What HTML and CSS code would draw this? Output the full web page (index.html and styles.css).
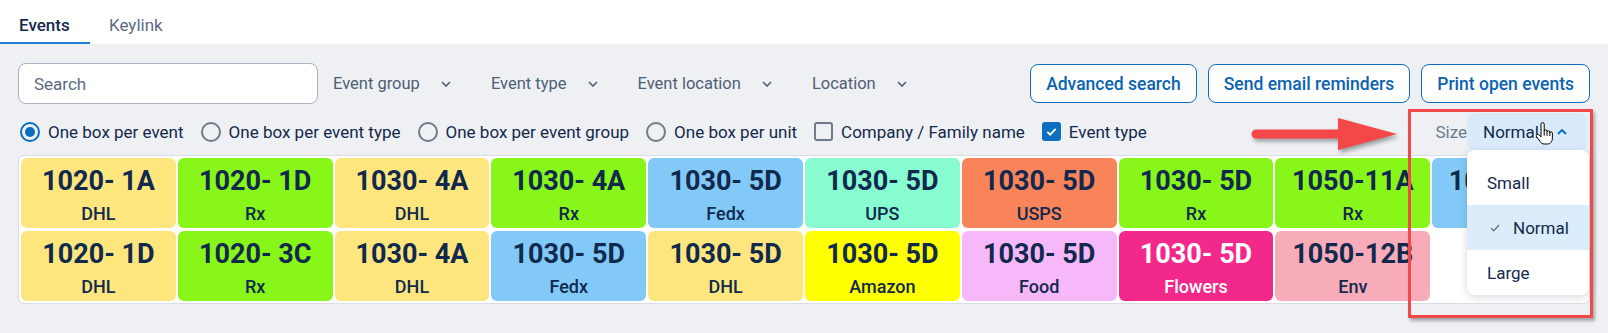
FILE: index.html
```html
<!DOCTYPE html>
<html lang="en">

<head>
    <meta charset="UTF-8">
    <meta name="viewport" content="width=device-width, initial-scale=1.0">
    <title>Events</title>
    <link rel="stylesheet" href="styles.css">
</head>

<body>
    <div class="page">
        <nav class="tabs">
            <a class="tab active" href="#">Events</a>
            <a class="tab" href="#">Keylink</a>
        </nav>

        <main class="content">
            <div class="toolbar">
                <input class="search" type="text" placeholder="Search">
                <div class="filters">
                    <span class="filter">Event group
                        <svg class="chev" viewBox="0 0 10 6"><path d="M1 1l4 4 4-4"/></svg></span>
                    <span class="filter">Event type
                        <svg class="chev" viewBox="0 0 10 6"><path d="M1 1l4 4 4-4"/></svg></span>
                    <span class="filter">Event location
                        <svg class="chev" viewBox="0 0 10 6"><path d="M1 1l4 4 4-4"/></svg></span>
                    <span class="filter">Location
                        <svg class="chev" viewBox="0 0 10 6"><path d="M1 1l4 4 4-4"/></svg></span>
                </div>
                <div class="actions">
                    <button class="btn">Advanced search</button>
                    <button class="btn">Send email reminders</button>
                    <button class="btn">Print open events</button>
                </div>
            </div>

            <div class="options">
                <label class="opt"><span class="radio checked"></span>One box per event</label>
                <label class="opt"><span class="radio"></span>One box per event type</label>
                <label class="opt"><span class="radio"></span>One box per event group</label>
                <label class="opt"><span class="radio"></span>One box per unit</label>
                <label class="opt"><span class="check"></span>Company / Family name</label>
                <label class="opt"><span class="check checked">
                    <svg viewBox="0 0 18 18"><path d="M4 9.5l3.3 3.3L14 5.8"/></svg></span>Event type</label>

                <div class="size">
                    <span class="size-label">Size</span>
                    <div class="size-select">
                        <button class="size-btn">Normal
                            <svg class="chev up" viewBox="0 0 10 6"><path d="M1 5l4-4 4 4"/></svg></button>
                        <svg class="cursor" viewBox="0 0 17 24">
                            <path d="M5 2.2a1.6 1.6 0 0 1 3.2 0v7a1.4 1.4 0 0 1 2.8 0v1a1.4 1.4 0 0 1 2.8 0v1a1.3 1.3 0 0 1 2.6 0v4.6c0 3.6-1.8 6.2-5 6.2h-3.2c-2 0-3.2-1-4.2-2.6l-3.4-4.8a1.4 1.4 0 0 1 2.2-1.8L5 14.8z"/>
                            <path d="M8.2 9.2v4.5M11 10.2v3.6M13.8 11.2v2.8"/>
                        </svg>
                        <ul class="size-menu">
                            <li>Small</li>
                            <li class="selected"><svg class="tick" viewBox="0 0 10 8"><path d="M1 4.2l2.8 2.6L9 1"/></svg>Normal</li>
                            <li>Large</li>
                        </ul>
                    </div>
                </div>
            </div>

            <div class="board">
                <div class="card c-yellow"><b>1020- 1A</b><span>DHL</span></div>
                <div class="card c-green"><b>1020- 1D</b><span>Rx</span></div>
                <div class="card c-yellow"><b>1030- 4A</b><span>DHL</span></div>
                <div class="card c-green"><b>1030- 4A</b><span>Rx</span></div>
                <div class="card c-blue"><b>1030- 5D</b><span>Fedx</span></div>
                <div class="card c-mint"><b>1030- 5D</b><span>UPS</span></div>
                <div class="card c-orange"><b>1030- 5D</b><span>USPS</span></div>
                <div class="card c-green"><b>1030- 5D</b><span>Rx</span></div>
                <div class="card c-green"><b>1050-11A</b><span>Rx</span></div>
                <div class="card c-blue"><b>1050-12A</b><span>Fedx</span></div>

                <div class="card c-yellow"><b>1020- 1D</b><span>DHL</span></div>
                <div class="card c-green"><b>1020- 3C</b><span>Rx</span></div>
                <div class="card c-yellow"><b>1030- 4A</b><span>DHL</span></div>
                <div class="card c-blue"><b>1030- 5D</b><span>Fedx</span></div>
                <div class="card c-yellow"><b>1030- 5D</b><span>DHL</span></div>
                <div class="card c-lemon"><b>1030- 5D</b><span>Amazon</span></div>
                <div class="card c-pink"><b>1030- 5D</b><span>Food</span></div>
                <div class="card c-magenta"><b>1030- 5D</b><span>Flowers</span></div>
                <div class="card c-rose"><b>1050-12B</b><span>Env</span></div>
            </div>
        </main>

        <!-- annotation drawn over the screenshot -->
        <div class="annot-box"></div>
        <svg class="annot-arrow" viewBox="0 0 160 40">
            <path d="M6 19H96" class="shaft"/>
            <polygon points="88,3 147,19 88,35"/>
        </svg>
    </div>
</body>

</html>
```

FILE: styles.css
```css
* {
    box-sizing: border-box;
}

body {
    margin: 0;
    background: #eef0f4;
    font-family: Roboto, "Liberation Sans", sans-serif;
    color: #11294a;
}

.page {
    position: relative;
    height: 333px;
    overflow: hidden;
}

/* tabs */
.tabs {
    display: flex;
    height: 44px;
    background: #fff;
}

.tab {
    display: block;
    padding: 15px 19px 7px;
    line-height: 20px;
    font-size: 17px;
    color: #5d6c80;
    text-decoration: none;
    border-bottom: 2px solid transparent;
}

.tab.active {
    width: 90px;
    color: #13294b;
    font-weight: 500;
    border-bottom-color: #1f7fd6;
}

.content {
    padding: 19px 18px 0;
}

/* toolbar */
.toolbar {
    display: flex;
    align-items: center;
}

.search {
    width: 300px;
    height: 41px;
    border: 1px solid #a8b2c0;
    border-radius: 8px;
    padding: 0 15px;
    font-family: inherit;
    font-size: 17px;
    background: #fff;
    outline: none;
}

.search::placeholder {
    color: #5c6b7f;
}

.filters {
    display: flex;
    align-items: center;
    gap: 40px;
    margin-left: 15px;
    font-size: 16.5px;
    color: #4e5f75;
}

.filter {
    display: flex;
    align-items: center;
    gap: 21px;
}

.chev {
    width: 10px;
    height: 6px;
    fill: none;
    stroke: #4e5f75;
    stroke-width: 1.6;
}

.actions {
    display: flex;
    gap: 11px;
    margin-left: auto;
}

.btn {
    height: 39px;
    padding: 0 15px;
    background: #fff;
    border: 1px solid #0b6ebf;
    border-radius: 8px;
    font-family: inherit;
    font-size: 17.5px;
    font-weight: 500;
    color: #0b63b3;
}

/* display options */
.options {
    display: flex;
    align-items: center;
    gap: 17px;
    height: 37px;
    margin-top: 9px;
    padding-left: 2px;
    font-size: 17px;
}

.opt {
    display: flex;
    align-items: center;
    gap: 8px;
    color: #13294b;
}

.radio {
    width: 20px;
    height: 20px;
    border: 2px solid #6f7b8b;
    border-radius: 50%;
    display: flex;
    align-items: center;
    justify-content: center;
}

.radio.checked {
    border-color: #0b6ebf;
}

.radio.checked::after {
    content: "";
    width: 10px;
    height: 10px;
    border-radius: 50%;
    background: #0b6ebf;
}

.check {
    width: 19px;
    height: 19px;
    border: 2px solid #6f7b8b;
    border-radius: 3px;
}

.check.checked {
    border-color: #0b6ebf;
    background: #0b6ebf;
}

.check svg {
    display: block;
    width: 15px;
    height: 15px;
    fill: none;
    stroke: #fff;
    stroke-width: 2.2;
}

.size {
    display: flex;
    align-items: center;
    margin-left: auto;
    margin-right: 2px;
}

.size-label {
    color: #6b7a8d;
}

.size-select {
    position: relative;
}

.size-btn {
    display: flex;
    align-items: center;
    gap: 18px;
    width: 121px;
    height: 37px;
    padding: 0 0 0 16px;
    border: none;
    border-radius: 8px;
    background: #d9ebfa;
    font-family: inherit;
    font-size: 17px;
    color: #13294b;
}

.chev.up {
    stroke: #0b6ebf;
    stroke-width: 2;
}

.cursor {
    position: absolute;
    left: 69px;
    top: 9px;
    width: 17px;
    height: 24px;
    fill: #fff;
    stroke: #000;
    stroke-width: 1;
}

.cursor path + path {
    fill: none;
}

.size-menu {
    position: absolute;
    top: 100%;
    left: 0;
    width: 122px;
    margin: 0;
    padding: 10px 0 0;
    list-style: none;
    background: #fff;
    border-radius: 8px;
    box-shadow: 0 2px 8px rgba(30, 45, 70, 0.18);
    z-index: 2;
}

.size-menu li {
    display: flex;
    align-items: center;
    height: 45px;
    padding-left: 20px;
    font-size: 17px;
    color: #13294b;
}

.size-menu li.selected {
    padding-left: 23px;
    gap: 13px;
    background: #dbecfa;
}

.tick {
    width: 10px;
    height: 8px;
    fill: none;
    stroke: #6b7785;
    stroke-width: 1.4;
}

/* event boxes */
.board {
    display: grid;
    grid-template-columns: repeat(10, 1fr);
    grid-auto-rows: 70px;
    gap: 3px 2px;
    margin-top: 5px;
    padding: 2px;
    background: #fff;
    border: 1px solid #d9dde4;
    border-radius: 6px;
}

.card {
    display: flex;
    flex-direction: column;
    align-items: center;
    gap: 7px;
    padding-top: 8px;
    border-radius: 6px;
    color: #10294d;
    white-space: nowrap;
    overflow: hidden;
}

.card b {
    font-size: 27px;
    line-height: 30px;
    font-weight: 700;
}

.card span {
    font-size: 18px;
    line-height: 22px;
    font-weight: 500;
}

.c-yellow { background: #fee67f; }
.c-green { background: #88f619; }
.c-blue { background: #82c9f8; }
.c-mint { background: #88fbd0; }
.c-orange { background: #f9845a; }
.c-lemon { background: #ffff00; }
.c-pink { background: #f7b8f9; }
.c-magenta { background: #f2298a; color: #fff; }
.c-rose { background: #f8abb8; }

/* red annotation */
.annot-box {
    position: absolute;
    left: 1408px;
    top: 109px;
    width: 185px;
    height: 209px;
    border: 3px solid #f24848;
    box-shadow: 2px 3px 3px rgba(0, 0, 0, 0.3);
    z-index: 3;
}

.annot-arrow {
    position: absolute;
    left: 1250px;
    top: 115px;
    width: 160px;
    height: 40px;
    fill: #f44848;
    filter: drop-shadow(2px 3px 2px rgba(0, 0, 0, 0.35));
    z-index: 3;
}

.annot-arrow .shaft {
    fill: none;
    stroke: #f44848;
    stroke-width: 9;
    stroke-linecap: round;
}
```
